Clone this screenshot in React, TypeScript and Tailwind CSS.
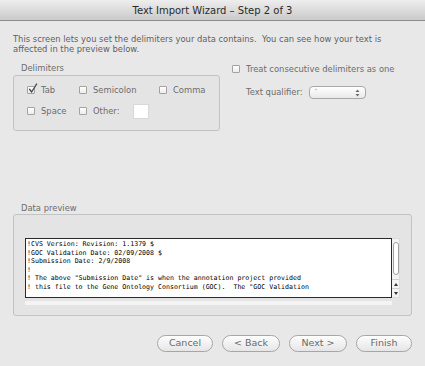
import React from "react";

const font = { fontFamily: '"DejaVu Sans", "Liberation Sans", sans-serif' };

function Check({ checked = false }: { checked?: boolean }) {
  return (
    <span className="relative inline-block w-[8px] h-[8px] shrink-0 border border-[#a3a3a3] rounded-[1px] bg-gradient-to-b from-[#ffffff] to-[#ececec]">
      {checked && (
        <svg className="absolute left-[0px] top-[-4px]" width="10" height="11" viewBox="0 0 10 11">
          <path d="M1.5 6.2 L3.6 9 L8.6 1" fill="none" stroke="#4a4a4a" strokeWidth="1.4" strokeLinecap="round" strokeLinejoin="round" />
        </svg>
      )}
    </span>
  );
}

function CheckItem({ label, checked = false, className = "" }: { label: string; checked?: boolean; className?: string }) {
  return (
    <div className={"flex items-center gap-[6px] " + className}>
      <Check checked={checked} />
      <span>{label}</span>
    </div>
  );
}

function Button({ label, w }: { label: string; w: string }) {
  return (
    <div
      className={
        "h-[17px] rounded-full border border-[#a6a6a6] bg-gradient-to-b from-[#fdfdfd] to-[#e6e6e6] flex items-center justify-center text-[9.5px] text-[#6a6a6a] shadow-[inset_0_1px_0_#ffffff] " +
        w
      }
    >
      {label}
    </div>
  );
}

const lines = [
  "!CVS Version: Revision: 1.1379 $",
  "!GOC Validation Date: 02/09/2008 $",
  "!Submission Date: 2/9/2008",
  "!",
  '! The above "Submission Date" is when the annotation project provided',
  '! this file to the Gene Ontology Consortium (GOC).  The "GOC Validation',
];

export default function App() {
  return (
    <div className="w-[425px] h-[366px] bg-[#e8e8e8] flex flex-col overflow-hidden" style={font}>
      <div className="h-[21px] shrink-0 bg-gradient-to-b from-[#eeeeee] to-[#cacaca] border-b border-[#8c8c8c] flex items-center justify-center text-[10px] text-[#2b2b2b]">
        Text Import Wizard – Step 2 of 3
      </div>

      <div className="flex flex-col px-[13px] pt-[13px]">
        <p className="text-[8.4px] leading-[10px] text-[#5f5f5f]">
          This screen lets you set the delimiters your data contains.&nbsp; You can see how your text is
          <br />
          affected in the preview below.
        </p>

        <div className="flex mt-[8px] text-[8.4px] text-[#6c6c6c]">
          <div className="w-[207px] shrink-0 flex flex-col">
            <div className="pl-[8px] h-[12px] leading-[12px]">Delimiters</div>
            <div className="mt-[1px] h-[56px] border border-[#c3c3c3] rounded-[3px] bg-[#e4e4e4] pl-[13px] pt-[7px]">
              <div className="grid grid-cols-[52px_80px_60px] items-center h-[14px]">
                <CheckItem label="Tab" checked />
                <CheckItem label="Semicolon" />
                <CheckItem label="Comma" />
              </div>
              <div className="grid grid-cols-[52px_140px] items-center mt-[6px] h-[16px]">
                <CheckItem label="Space" />
                <div className="flex items-center gap-[6px]">
                  <Check />
                  <span>Other:</span>
                  <span className="ml-[8px] w-[16px] h-[15px] bg-white border border-[#d8d8d8]" />
                </div>
              </div>
            </div>
          </div>

          <div className="ml-[12px] flex flex-col">
            <CheckItem label="Treat consecutive delimiters as one" className="h-[12px] mt-[1px]" />
            <div className="flex items-center ml-[14px] mt-[11px]">
              <span>Text qualifier:</span>
              <div className="ml-[6px] w-[57px] h-[13px] rounded-[4px] border border-[#a8a8a8] bg-gradient-to-b from-[#ffffff] to-[#e9e9e9] flex items-center justify-between px-[5px]">
                <span className="text-[6px] text-[#9a9a9a] leading-none self-start mt-[1px]">"</span>
                <svg width="5" height="8" viewBox="0 0 5 8">
                  <path d="M2.5 0.5 L4.5 3 L0.5 3 Z" fill="#6a6a6a" />
                  <path d="M2.5 7.5 L4.5 5 L0.5 5 Z" fill="#6a6a6a" />
                </svg>
              </div>
            </div>
          </div>
        </div>

        <div className="mt-[71px] flex flex-col text-[8.4px] text-[#6c6c6c]">
          <div className="pl-[8px] h-[12px] leading-[12px]">Data preview</div>
          <div className="h-[102px] border border-[#c3c3c3] rounded-[3px] bg-[#e4e4e4] pl-[11px] pt-[23px]">
            <div className="flex">
              <div
                className="w-[367px] h-[60px] bg-white border border-[#2a2a2a] pl-[1px] pt-[1px] overflow-hidden text-black text-[6.6px] leading-[8.6px] whitespace-pre"
                style={{ fontFamily: '"DejaVu Sans Mono", "Liberation Mono", monospace' }}
              >
                {lines.map((l, i) => (
                  <div key={i}>{l}</div>
                ))}
              </div>
              <div className="w-[8px] h-[60px] bg-[#f3f3f3] border-y border-r border-[#dcdcdc] flex flex-col">
                <div className="mt-[3px] mx-auto w-[6px] h-[33px] rounded-full border border-[#a0a0a0] bg-white" />
                <div className="flex-1" />
                <div className="h-[9px] border-t border-[#cfcfcf] flex items-center justify-center">
                  <svg width="4" height="3" viewBox="0 0 4 3"><path d="M2 0 L4 3 L0 3 Z" fill="#333" /></svg>
                </div>
                <div className="h-[9px] border-t border-[#cfcfcf] flex items-center justify-center">
                  <svg width="4" height="3" viewBox="0 0 4 3"><path d="M0 0 L4 0 L2 3 Z" fill="#333" /></svg>
                </div>
              </div>
            </div>
            <div className="mt-[3px] w-[367px] h-[4px] bg-[#f4f4f4]" />
          </div>
        </div>

        <div className="flex justify-end gap-[9px] mt-[19px]">
          <Button label="Cancel" w="w-[56px]" />
          <Button label="< Back" w="w-[58px]" />
          <Button label="Next >" w="w-[58px]" />
          <Button label="Finish" w="w-[56px]" />
        </div>
      </div>
    </div>
  );
}
